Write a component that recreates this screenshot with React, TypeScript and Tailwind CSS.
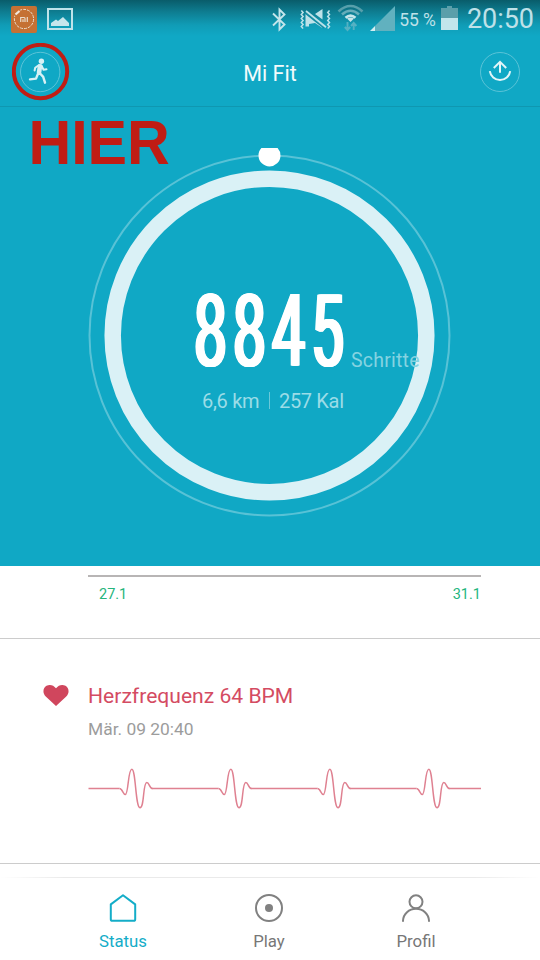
import React from "react";

function StatusBar() {
  return (
    <div className="relative h-[38px] w-full">
      <svg className="block h-[38px] w-[540px]" viewBox="0 0 540 38">
        <rect x="11" y="6" width="26" height="27" rx="2" fill="#c57134" />
        <circle cx="24" cy="19" r="9.6" fill="none" stroke="#e9dccb" strokeWidth="1" strokeDasharray="3 1" />
        <path d="M14.5 15.5 20 10.5" stroke="#c57134" strokeWidth="5" />
        <path d="M15.5 14.5 19.5 11" stroke="#f2e8dc" strokeWidth="2.2" />
        <path d="M20.7 22V17.5H24.2Q25 17.5 25 18.5V22M23 19.3V22M27.3 17V22" fill="none" stroke="#e9dccb" strokeWidth="1.2" />

        <rect x="48" y="9" width="24" height="20" fill="none" stroke="#bfe3ea" strokeWidth="2" />
        <path d="M51 26V23L56 19.5L58 21L63 17L69 23V26Z" fill="#c6e6ec" />

        <path d="M273 13.5 284.5 24.5 279.5 29.5V9.5L284.5 14.5 273 25.5" fill="none" stroke="#c3e5eb" strokeWidth="1.9" />

        <g stroke="#bde2e9" fill="none" strokeWidth="1.5">
          <path d="M301.3 10.5l1.8 2-1.8 2 1.8 2-1.8 2 1.8 2-1.8 2 1.8 2-1.8 2 1.8 2" />
          <path d="M329.5 10.5l-1.8 2 1.8 2-1.8 2 1.8 2-1.8 2 1.8 2-1.8 2 1.8 2-1.8 2" />
        </g>
        <path d="M305.5 13 309 15.5V26.5H305.5ZM309 16 322.5 26V28L315 23 309 24ZM315 14 322.5 9V19.5Z" fill="#bde2e9" />
        <path d="M305 12.8 324 28" stroke="#128ba1" strokeWidth="1.5" />
        <path d="M306 11 326 27.3" stroke="#bde2e9" strokeWidth="1.8" />

        <g fill="none" strokeWidth="2.6">
          <path d="M338.5 11.5Q350.5 0.5 362.5 11.5" stroke="#579fab" />
          <path d="M342 14.5Q350.5 7 359 14.5" stroke="#65adba" />
          <path d="M345.5 17.8Q350.5 13.5 355.5 17.8" stroke="#c5e6eb" />
        </g>
        <path d="M347 18.5Q350.5 16.5 354 18.5L350.5 22Z" fill="#c5e6eb" />
        <path d="M347.5 22V29.5M344.8 27 347.5 30 350.2 27M353.7 30V23M351 26 353.7 23 356.4 26" fill="none" stroke="#54b1c3" strokeWidth="1.9" />
        <path d="M395 6V31H375V26Z" fill="#61b1bf" />
        <path d="M375 26V31H370Z" fill="#d4eef2" />

        <path d="M447 6H452V8H458V18H441V8H447Z" fill="#5b9faa" />
        <rect x="441" y="18" width="17" height="12" fill="#c2e5eb" />
        <g fill="#bfe1e8" fontFamily="Roboto, sans-serif">
          <text x="399.3" y="26" fontSize="17.5" textLength="36.5">55 %</text>
          <text x="467" y="28" fontSize="27" textLength="67">20:50</text>
        </g>
      </svg>
    </div>
  );
}

function Header() {
  return (
    <header className="flex h-[69px] items-start justify-between border-b border-[#0f97b1] pl-3 pr-5 pt-[5px]">
      <svg className="h-[58px] w-[58px]" viewBox="12 43 58 58">
        <circle cx="40.5" cy="71.5" r="26.7" fill="none" stroke="#c01d14" strokeWidth="4" />
        <circle cx="40.2" cy="72" r="19.7" fill="none" stroke="#5bc3d7" strokeWidth="1" />
        <circle cx="41.4" cy="61.2" r="2.7" fill="#d8f1f5" />
        <g fill="none" stroke="#d8f1f5" strokeLinejoin="round" strokeLinecap="round">
          <path d="M40 66.3 39 72.5" strokeWidth="4.6" />
          <path d="M39 65 35.2 67.7 34.6 70.5M41.5 65.5 43.5 69.7 46.5 69.3" strokeWidth="2" />
          <path d="M39.6 73 43.2 76.8 45 82.7M38.3 73 36 78.6 30 79.4" strokeWidth="2.4" />
        </g>
      </svg>
      <h1 className="mr-[10px] mt-[17px] text-[21.5px] leading-[28px] text-[#f3fbfc]">Mi Fit</h1>
      <svg className="mt-[9px] h-10 w-10" viewBox="0 0 40 40" fill="none">
        <circle cx="20" cy="20" r="19.5" stroke="#5bc3d7" />
        <path d="M9.8 19.2A10.3 10.3 0 0 0 30.2 19.2M20 20.8V10M13.8 16 20 9.8 26.2 16" stroke="#e2f5f8" strokeWidth="2" />
      </svg>
    </header>
  );
}

function StepsRing() {
  return (
    <section className="relative h-[459px]">
      <svg className="block h-[459px] w-[540px]" viewBox="0 107 540 459">
        <circle cx="269.5" cy="335.5" r="180" fill="none" stroke="#58c2d6" strokeWidth="2" />
        <circle cx="269.5" cy="335.5" r="156.8" fill="none" stroke="#daf1f6" strokeWidth="16.5" />
        <path d="M261.4 148H277.6A11 11 0 1 1 261.4 148Z" fill="#fff" />
        <text x="28.4" y="164" fontFamily="Liberation Sans, Arial, sans-serif" fontWeight="700" fontSize="62.5" textLength="141.5" lengthAdjust="spacingAndGlyphs" fill="#c01d14">HIER</text>
        <g fontFamily="Roboto, sans-serif">
          <text x="351" y="367" fontSize="19.5" textLength="68.5" fill="#85d3e1">Schritte</text>
          <text x="202" y="408" fontSize="20" textLength="57.5" fill="#9bdce7">6,6 km</text>
          <text x="279" y="408" fontSize="20" textLength="65" fill="#9bdce7">257 Kal</text>
        </g>
        <path d="M269.5 392V409" stroke="#6bc8d9" />
      </svg>
      <div className="absolute left-[194px] top-[188px] h-[73px] w-[280px] origin-left scale-x-[.58] text-[101px] leading-[73px] tracking-[10.5px] text-white [text-shadow:1px_0_#fff,-1px_0_#fff,2px_0_#fff,-2px_0_#fff,3px_0_#fff,-3px_0_#fff]">
        8845
      </div>
    </section>
  );
}

function History() {
  return (
    <section className="h-[73px] border-b border-[#cccccc] pl-[88px] pr-[59px] pt-[9px]">
      <div className="h-[2px] bg-[#b8b5b5]" />
      <div className="flex justify-between pl-[11px] pt-[8px] text-[14.5px] leading-[20px] text-[#25b57c]">
        <span>27.1</span>
        <span>31.1</span>
      </div>
    </section>
  );
}

const beats = [119, 218, 317, 416];

function HeartRate() {
  return (
    <section className="h-[225px] border-b border-[#cccccc] pt-[43px]">
      <div className="flex pl-[43px]">
        <svg className="mt-[2px] h-[23px] w-[26px]" viewBox="0 0 26 23">
          <path d="M13 22 3 12.8C-1 9 .1 3.8 3.5 1.8 7 .1 10.5 1.2 13 4.3 15.5 1.2 19 .1 22.5 1.8 25.9 3.8 27 9 23 12.8Z" fill="#d0465d" />
        </svg>
        <div className="ml-[19px]">
          <h2 className="text-[21.1px] leading-[28px] text-[#d44b62]">Herzfrequenz 64 BPM</h2>
          <p className="mt-[6px] text-[17.4px] leading-[26px] text-[#9c9c9c]">Mär. 09 20:40</p>
        </div>
      </div>
      <svg className="ml-[88px] mt-[20px] block h-[50px] w-[394px]" viewBox="88 762 394 50">
        <g fill="none" stroke="#df8191" strokeWidth="1.5">
          <path d="M88.5 788.5H119.5M152 788.5H218.5M251 788.5H317.5M350 788.5H416.5M449 788.5H481" />
          {beats.map((x) => (
            <path
              key={x}
              transform={`translate(${x + 0.5} 788.5)`}
              d="M0 0C3 0 3.5 6 5.8 6C9 6 8.4-19.2 12.3-19.2C16.4-19.2 15.9 19.2 20.5 19.2C25 19.2 23.3-6 27.3-6C29.8-6 30 0 33 0"
            />
          ))}
        </g>
      </svg>
    </section>
  );
}

function TabBar() {
  return (
    <div className="flex h-[96px] flex-col pt-[13px]">
      <div className="h-px bg-[linear-gradient(90deg,#fff,#eaeaea_12%,#eaeaea_88%,#fff)]" />
      <nav className="grid grid-cols-[146px_146px_148px] pl-[50px] pt-[14px] text-center text-[16.8px] leading-[22px] text-[#777777]">
        <div className="flex flex-col items-center text-[#14adc8]">
          <svg className="h-8 w-8" viewBox="0 0 32 32" fill="none" stroke="currentColor" strokeWidth="2" strokeLinejoin="round">
            <path d="M3.8 12.4 16 3.2 28.2 12.4V27.2Q28.2 28.8 26.6 28.8H5.4Q3.8 28.8 3.8 27.2Z" />
          </svg>
          <span className="mt-[6px]">Status</span>
        </div>
        <div className="flex flex-col items-center">
          <svg className="h-8 w-8" viewBox="0 0 32 32" fill="none" stroke="#818181" strokeWidth="2">
            <circle cx="16" cy="16" r="13" />
            <circle cx="16" cy="16" r="4" fill="#818181" stroke="none" />
          </svg>
          <span className="mt-[6px]">Play</span>
        </div>
        <div className="flex flex-col items-center">
          <svg className="h-8 w-8" viewBox="0 0 32 32" fill="none" stroke="#818181" strokeWidth="2">
            <circle cx="16" cy="9.8" r="6.5" />
            <path d="M3 29.8V28.8C3.3 21.8 9 16.8 16 16.8S28.7 21.8 29 28.8V29.8" />
          </svg>
          <span className="mt-[6px]">Profil</span>
        </div>
      </nav>
    </div>
  );
}

export default function App() {
  return (
    <main className="h-[960px] w-[540px] overflow-hidden bg-white font-[Roboto,sans-serif]">
      <div className="h-[566px] bg-[#10a8c5] bg-[linear-gradient(#095c6a_0px,#0e7d91_12px,#109cb6_25px,#10a8c5_36px)]">
        <StatusBar />
        <Header />
        <StepsRing />
      </div>
      <History />
      <HeartRate />
      <TabBar />
    </main>
  );
}
